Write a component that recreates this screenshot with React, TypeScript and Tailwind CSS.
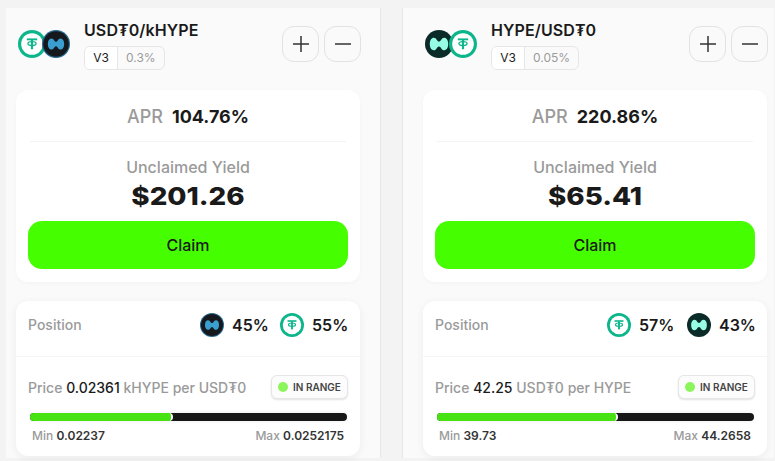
import React from "react";

function Tether({ size, className = "" }: { size: number; className?: string }) {
  return (
    <svg width={size} height={size} viewBox="0 0 28 28" className={className}>
      <circle cx="14" cy="14" r="14" fill="#0db58b" />
      <circle cx="14" cy="14" r="10.8" fill="#fff" />
      <path d="M8.800 8.400h10.400v1.900H8.800z" fill="#0db58b" />
      <ellipse cx="14" cy="13.600" rx="4.100" ry="1.900" fill="none" stroke="#0db58b" strokeWidth="1.300" />
      <path d="M12.900 10h2.200v8.300L14 19.800l-1.100-1.500z" fill="#0db58b" />
    </svg>
  );
}

function Kinetiq({ size, className = "" }: { size: number; className?: string }) {
  return (
    <svg width={size} height={size} viewBox="0 0 28 28" className={className}>
      <circle cx="14" cy="14" r="14" fill="#27678c" />
      <circle cx="14" cy="14" r="12.800" fill="#15191e" />
      <path d="M5.800 14c0-3.400 1.500-5.600 3.600-5.600 2.700 0 2.800 3.400 4.600 3.400s1.900-3.400 4.600-3.400c2.100 0 3.600 2.200 3.600 5.600s-1.500 5.600-3.600 5.600c-2.700 0-2.800-3.400-4.600-3.400s-1.900 3.400-4.600 3.400c-2.100 0-3.600-2.200-3.600-5.600z" fill="#3a9fd0" />
    </svg>
  );
}

function Hype({ size, className = "" }: { size: number; className?: string }) {
  return (
    <svg width={size} height={size} viewBox="0 0 28 28" className={className}>
      <circle cx="14" cy="14" r="14" fill="#0b2b29" />
      <path d="M4.800 14c0-3.800 1.700-6.200 4-6.200 3 0 3 3.800 5.200 3.800s2.200-3.800 5.200-3.800c2.300 0 4 2.400 4 6.200s-1.700 6.200-4 6.200c-3 0-3-3.800-5.200-3.800s-2.200 3.800-5.200 3.800c-2.300 0-4-2.400-4-6.200z" fill="#97fce4" />
    </svg>
  );
}

function Panel(p: {
  title: string;
  fee: string;
  icons: React.ReactNode;
  apr: string;
  yieldV: string;
  pos: React.ReactNode;
  price: string;
  per: string;
  pct: number;
  min: string;
  max: string;
  side: string;
}) {
  return (
    <div className={`h-[450px] bg-[#fafafa] shrink-0 ${p.side}`}>
      <div className="w-[344px] flex h-[82px] items-start pl-[2px]">
        <div className="w-[66px] h-[28px] mt-[22px] flex items-center shrink-0">{p.icons}</div>
        <div className="mt-[11px] flex-1">
          <div className="text-[16px] leading-[22px] font-semibold text-[#1a1a1a] tracking-[0.1px]">{p.title}</div>
          <div className="mt-[5px] inline-flex h-[24px] rounded-[6px] border border-[#e6e6e6] text-[12px] overflow-hidden">
            <span className="w-[33px] bg-white border-r border-[#e6e6e6] text-[#1a1a1a] flex items-center justify-center">V3</span>
            <span className="px-[8px] text-[#9a9a9a] flex items-center">{p.fee}</span>
          </div>
        </div>
        <div className="flex gap-[5px] mt-[18px] mr-[-1px]">
          <button className="w-[37px] h-[36px] rounded-[12px] border border-[#e2e2e2] flex items-center justify-center">
            <svg width="18" height="18" viewBox="0 0 18 18"><path d="M9 1v16M1 9h16" stroke="#333" strokeWidth="1.500" /></svg>
          </button>
          <button className="w-[37px] h-[36px] rounded-[12px] border border-[#e2e2e2] flex items-center justify-center">
            <svg width="18" height="18" viewBox="0 0 18 18"><path d="M1 9h16" stroke="#333" strokeWidth="1.500" /></svg>
          </button>
        </div>
      </div>
      <div className="w-[344px] bg-white rounded-[12px] h-[192px] px-[12px] shadow-[0_1px_4px_rgba(0,0,0,0.03)]">
        <div className="h-[52px] pt-[1px] flex items-center justify-center gap-[9px] border-b border-[#f3f3f3] mx-[2px]">
          <span className="text-[18px] text-[#9a9a9a] font-medium">APR</span>
          <span className="text-[18px] text-[#1a1a1a] font-bold">{p.apr}</span>
        </div>
        <div className="text-center text-[16px] leading-[22px] text-[#9a9a9a] font-medium mt-[14px]">Unclaimed Yield</div>
        <div className="text-center text-[25px] leading-[30px] font-extrabold text-[#1a1a1a] scale-x-[1.11] mt-[3px]">{p.yieldV}</div>
        <button className="w-full h-[48px] rounded-[14px] bg-[#45ff00] text-[16px] font-medium text-[#1a1a1a] mt-[10px]">Claim</button>
      </div>
      <div className="w-[344px] mt-[19px] bg-white rounded-[12px] h-[155px] shadow-[0_2px_8px_rgba(0,0,0,0.06)]">
        <div className="h-[56px] flex items-start justify-between px-[12px] pt-[12px] border-b border-[#f5f5f5]">
          <span className="text-[14px] leading-[24px] text-[#9a9a9a] font-medium">Position</span>
          <div className="flex items-center">{p.pos}</div>
        </div>
        <div className="flex items-center justify-between px-[12px] mt-[18px] h-[24px]">
          <div className="text-[14px] text-[#9a9a9a] font-medium">
            Price <span className="text-[#1a1a1a]">{p.price}</span> {p.per}
          </div>
          <div className="h-[24px] w-[77px] bg-[#fcfcfc] rounded-[6px] border border-[#e6e6e6] shadow-[0_1px_2px_rgba(0,0,0,0.12)] flex items-center justify-center gap-[5px] text-[10px] font-semibold text-[#444]">
            <span className="w-[10px] h-[10px] rounded-full bg-[#8cf55c]" />
            IN RANGE
          </div>
        </div>
        <div className="ml-[14px] mr-[13px] mt-[14px] h-[8px] rounded-full bg-[#171717] flex overflow-hidden shadow-[0_0_4px_rgba(0,0,0,0.08)]">
          <div className="h-full bg-[#47e212] rounded-r-full border-r-2 border-white" style={{ width: `${p.pct}%` }} />
        </div>
        <div className="flex justify-between text-[12px] leading-[16px] font-medium text-[#9a9a9a] mx-[16px] mt-[7px]">
          <span>Min <span className="text-[#333] font-semibold">{p.min}</span></span>
          <span>Max <span className="text-[#333] font-semibold">{p.max}</span></span>
        </div>
      </div>
    </div>
  );
}

const Pct = ({ v }: { v: string }) => (
  <span className="w-[36px] text-[16px] leading-[24px] font-semibold text-[#1a1a1a] ml-[8px]">{v}</span>
);

export default function App() {
  return (
    <div className="w-[775px] h-[461px] overflow-hidden bg-[#f3f3f3] flex pt-[8px] pl-[6px] gap-[21px] font-['Inter',sans-serif]">
      <Panel
        title="USD₮0/kHYPE"
        fee="0.3%"
        icons={
          <>
            <Tether size={28} />
            <Kinetiq size={28} className="-ml-[4px] relative" />
          </>
        }
        apr="104.76%"
        yieldV="$201.26"
        pos={
          <>
            <Kinetiq size={24} />
            <Pct v="45%" />
            <Tether size={24} className="ml-[12px]" />
            <Pct v="55%" />
          </>
        }
        price="0.02361"
        per="kHYPE per USD₮0"
        pct={45}
        min="0.02237"
        max="0.0252175"
        side="w-[375px] pl-[10px] border-r border-[#e8e8e8]"
      />
      <Panel
        title="HYPE/USD₮0"
        fee="0.05%"
        icons={
          <>
            <Hype size={28} />
            <Tether size={28} className="-ml-[4px] relative" />
          </>
        }
        apr="220.86%"
        yieldV="$65.41"
        pos={
          <>
            <Tether size={24} />
            <Pct v="57%" />
            <Hype size={24} className="ml-[12px]" />
            <Pct v="43%" />
          </>
        }
        price="42.25"
        per="USD₮0 per HYPE"
        pct={57}
        min="39.73"
        max="44.2658"
        side="w-[372px] pl-[20px] border-l border-[#e8e8e8]"
      />
    </div>
  );
}
